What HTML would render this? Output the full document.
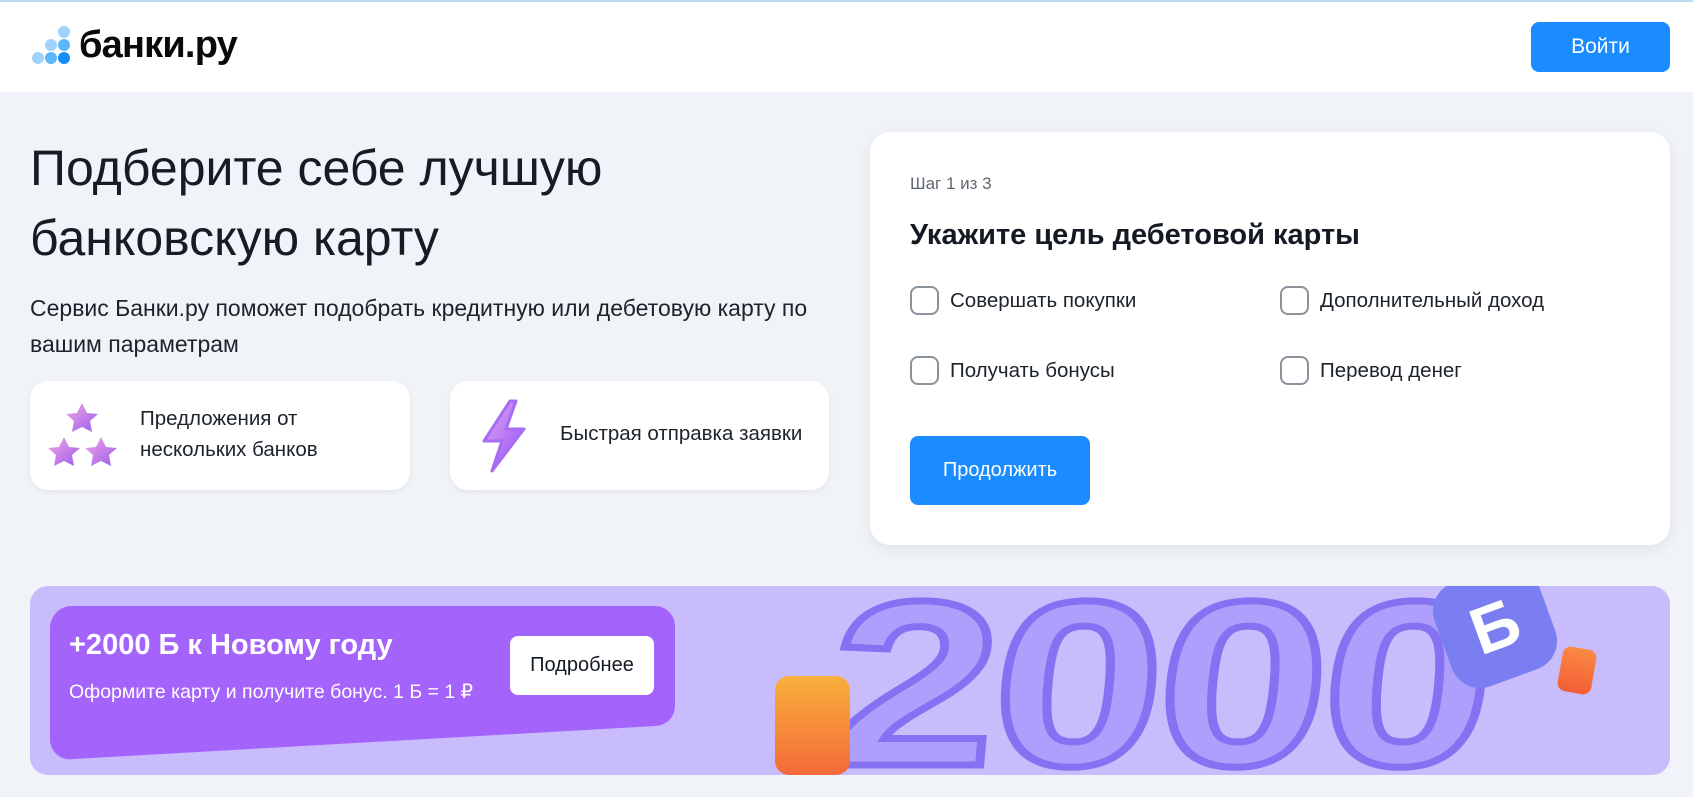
<!DOCTYPE html>
<html><head><meta charset="utf-8"><style>
*{box-sizing:border-box;margin:0;padding:0}
body{width:1693px;height:797px;overflow:hidden;background:#f0f3f7;font-family:"Liberation Sans","DejaVu Sans",sans-serif;color:#141a22;position:relative}
.abs{position:absolute}
header{position:absolute;left:0;top:0;width:1693px;height:92px;background:#fff;border-top:2px solid #b9dcf3}
.btn{background:#1a8cff;color:#fff;border-radius:8px;display:flex;align-items:center;justify-content:center;font-size:20px}
.card{background:#fff;border-radius:18px;box-shadow:0 2px 6px rgba(0,0,0,.06)}
.cb{position:absolute;width:29px;height:29px;border:2px solid #8a929c;border-radius:8px;background:#fff}
.lbl{position:absolute;font-size:20.5px;color:#1c232b}
</style></head><body>
<header>
 <svg class="abs" style="left:28px;top:22px" width="46" height="44" viewBox="0 0 46 44">
  <circle cx="36" cy="8" r="6" fill="#9fd3fb"/>
  <circle cx="23" cy="21" r="6" fill="#9fd3fb"/><circle cx="36" cy="21" r="6" fill="#5ab7fa"/>
  <circle cx="10" cy="34" r="6" fill="#9fd3fb"/><circle cx="23" cy="34" r="6" fill="#5ab7fa"/><circle cx="36" cy="34" r="6" fill="#148ef5"/>
 </svg>
 <div class="abs" style="left:79px;top:22px;font-size:38px;font-weight:bold;color:#0a0a0a;letter-spacing:-0.8px">банки.ру</div>
 <div class="abs btn" style="left:1531px;top:20px;width:139px;height:50px;font-size:21px">Войти</div>
</header>

<div class="abs" style="left:30px;top:133px;font-size:50px;line-height:70px;color:#151c25">Подберите себе лучшую<br>банковскую карту</div>
<div class="abs" style="left:30px;top:290px;font-size:23px;line-height:36px;color:#1c232b">Сервис Банки.ру поможет подобрать кредитную или дебетовую карту по<br>вашим параметрам</div>

<div class="abs card" style="left:30px;top:381px;width:380px;height:109px">
 <svg class="abs" style="left:16px;top:20px" width="72" height="70" viewBox="0 0 72 70">
  <defs><linearGradient id="s" x1="0" y1="0" x2="1" y2="1"><stop offset="0" stop-color="#f2a6e0"/><stop offset="1" stop-color="#9b5cf0"/></linearGradient></defs>
  <path d="M36 2l5 10 11 1-8 7 2 11-10-5-10 5 2-11-8-7 11-1z" fill="url(#s)"/>
  <path d="M18 36l5 10 11 1-8 7 2 11-10-5-10 5 2-11-8-7 11-1z" fill="url(#s)"/>
  <path d="M55 36l5 10 11 1-8 7 2 11-10-5-10 5 2-11-8-7 11-1z" fill="url(#s)"/>
 </svg>
 <div class="abs" style="left:110px;top:22px;font-size:20.5px;line-height:31px;color:#1c232b">Предложения от<br>нескольких банков</div>
</div>
<div class="abs card" style="left:450px;top:381px;width:379px;height:109px">
 <svg class="abs" style="left:30px;top:18px" width="48" height="74" viewBox="0 0 48 74">
  <defs><linearGradient id="b" x1="0" y1="0" x2="1" y2="1"><stop offset="0" stop-color="#e9a8f5"/><stop offset="1" stop-color="#8a4ef0"/></linearGradient></defs>
  <path d="M30 2L4 42h18L12 72 44 30H26L36 2z" fill="url(#b)" stroke="#a66cf2" stroke-width="3" stroke-linejoin="round"/>
 </svg>
 <div class="abs" style="left:110px;top:41px;font-size:20.5px;color:#1c232b">Быстрая отправка заявки</div>
</div>

<div class="abs card" style="left:870px;top:132px;width:800px;height:413px;border-radius:20px;box-shadow:0 4px 14px rgba(0,0,0,.07)">
 <div class="abs" style="left:40px;top:42px;font-size:17px;color:#5f6872">Шаг 1 из 3</div>
 <div class="abs" style="left:40px;top:87px;font-size:29px;font-weight:bold;color:#141a22">Укажите цель дебетовой карты</div>
 <div class="cb" style="left:40px;top:154px"></div><div class="lbl" style="left:80px;top:157px">Совершать покупки</div>
 <div class="cb" style="left:410px;top:154px"></div><div class="lbl" style="left:450px;top:157px">Дополнительный доход</div>
 <div class="cb" style="left:40px;top:224px"></div><div class="lbl" style="left:80px;top:227px">Получать бонусы</div>
 <div class="cb" style="left:410px;top:224px"></div><div class="lbl" style="left:450px;top:227px">Перевод денег</div>
 <div class="abs btn" style="left:40px;top:304px;width:180px;height:69px">Продолжить</div>
</div>

<div class="abs" style="left:30px;top:586px;width:1640px;height:189px;background:#c8bcfc;border-radius:18px;overflow:hidden">
 <div class="abs" style="left:810px;top:-20px;font-size:235px;font-weight:bold;color:#ad9ffb;-webkit-text-stroke:7px #8572f2;letter-spacing:-4px;line-height:235px;transform-origin:0 0;transform:scaleX(1.3) skewX(-4deg)">2000</div>
 <div class="abs" style="left:1410px;top:-15px;width:110px;height:110px;border-radius:30px;background:#7b7ef0;transform:rotate(-20deg);color:#fff;font-size:66px;font-weight:bold;display:flex;align-items:center;justify-content:center">Б</div>
 <div class="abs" style="left:745px;top:90px;width:75px;height:99px;border-radius:14px;background:linear-gradient(#f7b03b,#f56a3a)"></div>
 <div class="abs" style="left:1530px;top:62px;width:34px;height:45px;border-radius:8px;background:linear-gradient(#fa8a44,#f35e35);transform:rotate(10deg)"></div>
 <svg class="abs" style="left:20px;top:20px" width="630" height="155"><path d="M22 0H605a20 20 0 0 1 20 20V100a20 20 0 0 1-20 20L24 153A20 20 0 0 1 0 133V22A22 22 0 0 1 22 0z" fill="#a463fb"/></svg>
 <div class="abs" style="left:39px;top:43px;font-size:29px;font-weight:bold;color:#fff">+2000 Б к Новому году</div>
 <div class="abs" style="left:39px;top:94px;font-size:19.5px;color:#fff">Оформите карту и получите бонус. 1 Б = 1 ₽</div>
 <div class="abs" style="left:480px;top:50px;width:144px;height:59px;background:#fff;border-radius:8px;display:flex;align-items:center;justify-content:center;font-size:20px;color:#141a22">Подробнее</div>
</div>
</body></html>
